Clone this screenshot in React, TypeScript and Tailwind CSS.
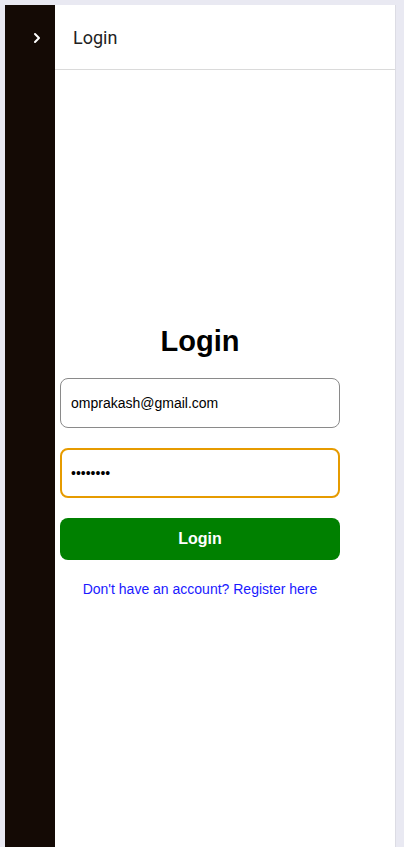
import { ChevronRight } from "lucide-react";

export default function App() {
  return (
    <div className="min-h-[847px] bg-[#e9e9f2] pl-[5px] pr-[8px] pt-[5px]" style={{ fontFamily: '"Liberation Sans", Arial, sans-serif' }}>
      <div className="flex h-[842px] border-r border-[#dcdce4] bg-white">
        {/* sidebar */}
        <aside className="flex w-[50px] shrink-0 justify-center bg-[#140a05] pl-[14px] pt-[25px]">
          <ChevronRight size={16} strokeWidth={3} className="text-white" />
        </aside>

        <div className="flex flex-1 flex-col">
          <header className="flex h-[65px] items-center border-b border-[#dadada] pl-[18px]">
            <span className="text-[18px] text-[#222]" style={{ fontFamily: "Roboto, sans-serif" }}>
              Login
            </span>
          </header>

          <main className="flex flex-1 flex-col justify-center pl-[5px] pt-[4px]">
            <form className="flex w-[280px] flex-col" onSubmit={(e) => e.preventDefault()}>
              <h1 className="mb-[20px] mt-[2px] text-center text-[29px] font-bold leading-[34px] text-black">Login</h1>
              <input
                type="email"
                defaultValue="omprakash@gmail.com"
                className="h-[50px] rounded-lg border border-[#8a8a8a] px-[10px] text-[14px] text-black outline-none"
              />
              <input
                type="password"
                defaultValue="12345678"
                autoFocus
                className="mt-[20px] h-[50px] rounded-lg border-2 border-[#e69b00] px-[9px] text-[14px] text-black outline-none caret-black"
              />
              <button
                type="submit"
                className="mt-[20px] h-[42px] rounded-lg bg-[#008000] text-[16px] font-bold text-white"
              >
                Login
              </button>
              <a href="#" className="mt-[19px] text-center text-[14px] text-[#1a1aff]">
                Don't have an account? Register here
              </a>
            </form>
          </main>
        </div>
      </div>
    </div>
  );
}
